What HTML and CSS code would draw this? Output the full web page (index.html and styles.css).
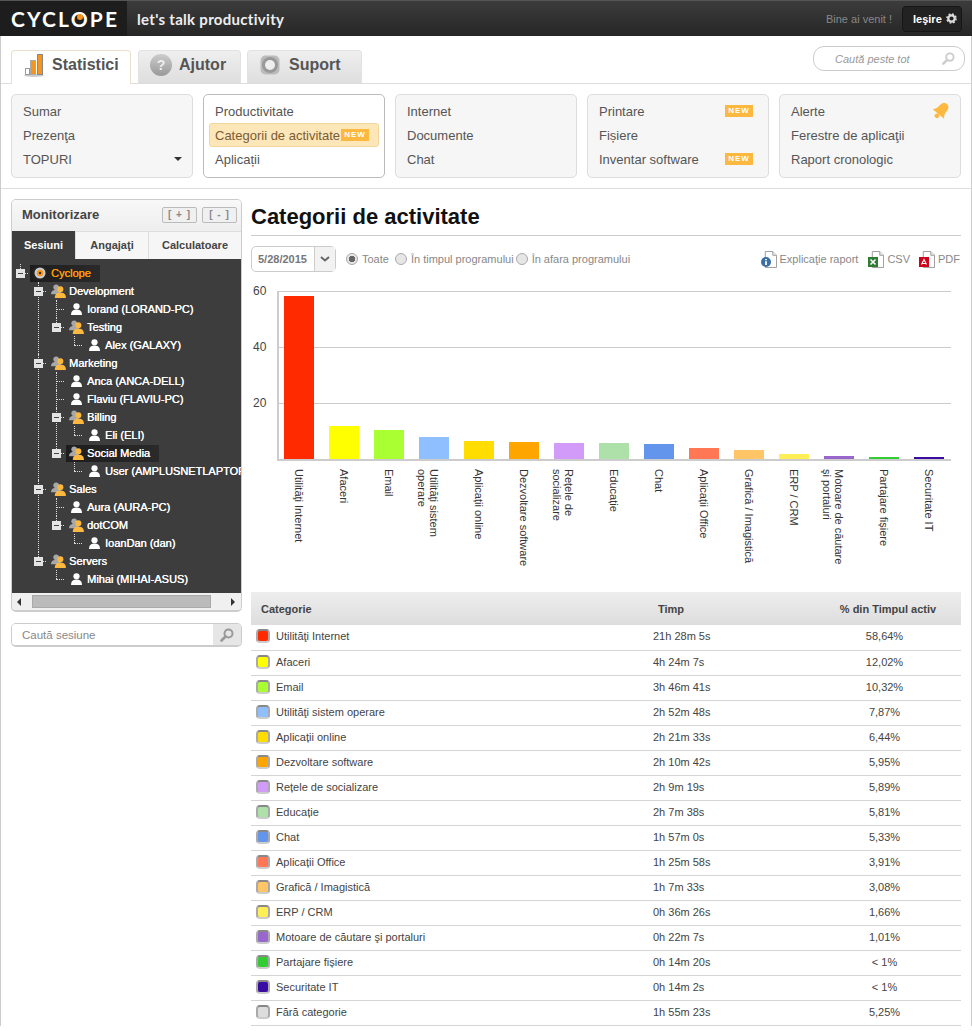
FILE: index.html
```html
<!DOCTYPE html>
<html lang="ro">
<head>
    <meta charset="UTF-8">
    <title>Cyclope - Categorii de activitate</title>
    <link rel="stylesheet" href="styles.css">
</head>
<body>

    <!-- shared icons -->
    <svg class="defs" width="0" height="0">
        <symbol id="i-person" viewBox="0 0 12 13">
            <circle cx="6" cy="3.6" r="3.4" fill="#fff"/>
            <path d="M0 13c0-3.6 1.6-5 4-5.6h4c2.4 .6 4 2 4 5.6z" fill="#fff"/>
        </symbol>
        <symbol id="i-group" viewBox="0 0 16 15">
            <circle cx="5.5" cy="3.5" r="3" fill="#a8a8a8"/>
            <path d="M0 11c0-3 1.5-4 3.5-4.5h4C9.5 7 11 8 11 11z" fill="#a8a8a8"/>
            <circle cx="10" cy="5.5" r="3.2" fill="#fdb93f"/>
            <path d="M4 15c0-3.5 1.8-5 4-5.5h4c2.2 .5 4 2 4 5.5z" fill="#fdb93f"/>
        </symbol>
        <symbol id="i-search" viewBox="0 0 14 14">
            <circle cx="8.5" cy="5.5" r="4" fill="none" stroke="currentColor" stroke-width="2"/>
            <path d="M5.5 8.5L1.5 12.5" stroke="currentColor" stroke-width="2.6" stroke-linecap="round"/>
        </symbol>
        <symbol id="i-doc" viewBox="0 0 16 18">
            <path d="M3.5 .5h8l4 4v13h-12z" fill="#fff" stroke="#999"/>
            <path d="M11.5 .5v4h4" fill="#eee" stroke="#999"/>
        </symbol>
    </svg>

    <header class="topbar">
        <div class="logo">CYCL<span class="logo-o">O</span>PE</div>
        <div class="slogan">let's talk productivity</div>
        <div class="welcome">Bine ai venit !</div>
        <a class="logout">Ieşire
            <svg class="gear" viewBox="0 0 12 12">
                <circle cx="6" cy="6" r="3.5" fill="none" stroke="#ddd" stroke-width="2.4"/>
                <circle cx="6" cy="6" r="5" fill="none" stroke="#ddd" stroke-width="1.6" stroke-dasharray="2 1.93"/>
            </svg>
        </a>
    </header>

    <div class="page">
        <nav class="tabbar">
            <a class="tab active">
                <svg class="tab-chart" viewBox="0 0 20 24">
                    <ellipse cx="10" cy="22.5" rx="10" ry="1.5" fill="#ccc"/>
                    <rect x="1.5" y="15.5" width="4" height="6" fill="#fff" stroke="#999"/>
                    <rect x="6.5" y="7.5" width="5" height="14" fill="#f7941d" stroke="#aaa"/>
                    <rect x="13.5" y="1.5" width="5" height="20" fill="#f7941d" stroke="#888"/>
                </svg>
                Statistici
            </a>
            <a class="tab tab-help"><span class="help-ico">?</span>Ajutor</a>
            <a class="tab tab-support">
                <svg class="support-ico" viewBox="0 0 20 20">
                    <rect x=".5" y=".5" width="19" height="19" rx="5" fill="#bbb"/>
                    <circle cx="10" cy="10" r="8" fill="#999"/>
                    <circle cx="10" cy="10" r="5" fill="#eee"/>
                </svg>
                Suport
            </a>
            <div class="global-search">
                <input type="text" placeholder="Caută peste tot">
                <svg class="search-ico"><use href="#i-search"/></svg>
            </div>
        </nav>

        <div class="submenu">
            <ul class="menu-box">
                <li>Sumar</li>
                <li>Prezenţa</li>
                <li>TOPURI<span class="caret"></span></li>
            </ul>
            <ul class="menu-box current">
                <li>Productivitate</li>
                <li class="selected">Categorii de activitate<span class="new">NEW</span></li>
                <li>Aplicații</li>
            </ul>
            <ul class="menu-box">
                <li>Internet</li>
                <li>Documente</li>
                <li>Chat</li>
            </ul>
            <ul class="menu-box">
                <li>Printare<span class="new">NEW</span></li>
                <li>Fișiere</li>
                <li>Inventar software<span class="new">NEW</span></li>
            </ul>
            <ul class="menu-box">
                <li>Alerte
                    <svg class="bell" viewBox="1 1 14 14">
                        <g transform="rotate(40 8 8)" fill="#fdb93f">
                            <path d="M8 0C5 0 4 2.5 4 5.5 4 8.5 3 10 1.5 11.5h13C13 10 12 8.5 12 5.5 12 2.5 11 0 8 0z"/>
                            <circle cx="8" cy="13.5" r="2"/>
                        </g>
                    </svg>
                </li>
                <li>Ferestre de aplicaţii</li>
                <li>Raport cronologic</li>
            </ul>
        </div>

        <div class="content">
            <aside class="sidebar">
                <section class="monitor">
                    <div class="monitor-head">
                        <h3>Monitorizare</h3>
                        <a class="mini-btn">[ + ]</a>
                        <a class="mini-btn">[ - ]</a>
                    </div>
                    <div class="monitor-tabs">
                        <a class="m-tab on">Sesiuni</a>
                        <a class="m-tab">Angajaţi</a>
                        <a class="m-tab">Calculatoare</a>
                    </div>
                    <div class="tree">
                        <ul>
                            <li>
                                <div class="node"><span class="toggle"></span><span class="node-body sel root">
                                    <svg class="ico-root" viewBox="0 0 14 14"><rect width="14" height="14" rx="4" fill="#222"/><circle cx="7" cy="7" r="5.5" fill="#ccc"/><circle cx="7" cy="7" r="3.2" fill="#f7941d"/><circle cx="7" cy="7" r="1.2" fill="#333"/></svg>
                                    <span class="name">Cyclope</span></span></div>
                                <ul>
                                    <li>
                                        <div class="node"><span class="toggle"></span><span class="node-body"><svg class="ico-group"><use href="#i-group"/></svg><span class="name">Development</span></span></div>
                                        <ul>
                                            <li><div class="node"><span class="no-toggle"></span><span class="node-body"><svg class="ico-person"><use href="#i-person"/></svg><span class="name">Iorand (LORAND-PC)</span></span></div></li>
                                            <li>
                                                <div class="node"><span class="toggle"></span><span class="node-body"><svg class="ico-group"><use href="#i-group"/></svg><span class="name">Testing</span></span></div>
                                                <ul>
                                                    <li><div class="node"><span class="no-toggle"></span><span class="node-body"><svg class="ico-person"><use href="#i-person"/></svg><span class="name">Alex (GALAXY)</span></span></div></li>
                                                </ul>
                                            </li>
                                        </ul>
                                    </li>
                                    <li>
                                        <div class="node"><span class="toggle"></span><span class="node-body"><svg class="ico-group"><use href="#i-group"/></svg><span class="name">Marketing</span></span></div>
                                        <ul>
                                            <li><div class="node"><span class="no-toggle"></span><span class="node-body"><svg class="ico-person"><use href="#i-person"/></svg><span class="name">Anca (ANCA-DELL)</span></span></div></li>
                                            <li><div class="node"><span class="no-toggle"></span><span class="node-body"><svg class="ico-person"><use href="#i-person"/></svg><span class="name">Flaviu (FLAVIU-PC)</span></span></div></li>
                                            <li>
                                                <div class="node"><span class="toggle"></span><span class="node-body"><svg class="ico-group"><use href="#i-group"/></svg><span class="name">Billing</span></span></div>
                                                <ul>
                                                    <li><div class="node"><span class="no-toggle"></span><span class="node-body"><svg class="ico-person"><use href="#i-person"/></svg><span class="name">Eli (ELI)</span></span></div></li>
                                                </ul>
                                            </li>
                                            <li>
                                                <div class="node"><span class="toggle"></span><span class="node-body sel"><svg class="ico-group"><use href="#i-group"/></svg><span class="name">Social Media</span></span></div>
                                                <ul>
                                                    <li><div class="node"><span class="no-toggle"></span><span class="node-body"><svg class="ico-person"><use href="#i-person"/></svg><span class="name">User (AMPLUSNETLAPTOP)</span></span></div></li>
                                                </ul>
                                            </li>
                                        </ul>
                                    </li>
                                    <li>
                                        <div class="node"><span class="toggle"></span><span class="node-body"><svg class="ico-group"><use href="#i-group"/></svg><span class="name">Sales</span></span></div>
                                        <ul>
                                            <li><div class="node"><span class="no-toggle"></span><span class="node-body"><svg class="ico-person"><use href="#i-person"/></svg><span class="name">Aura (AURA-PC)</span></span></div></li>
                                            <li>
                                                <div class="node"><span class="toggle"></span><span class="node-body"><svg class="ico-group"><use href="#i-group"/></svg><span class="name">dotCOM</span></span></div>
                                                <ul>
                                                    <li><div class="node"><span class="no-toggle"></span><span class="node-body"><svg class="ico-person"><use href="#i-person"/></svg><span class="name">IoanDan (dan)</span></span></div></li>
                                                </ul>
                                            </li>
                                        </ul>
                                    </li>
                                    <li>
                                        <div class="node"><span class="toggle"></span><span class="node-body"><svg class="ico-group"><use href="#i-group"/></svg><span class="name">Servers</span></span></div>
                                        <ul>
                                            <li><div class="node"><span class="no-toggle"></span><span class="node-body"><svg class="ico-person"><use href="#i-person"/></svg><span class="name">Mihai (MIHAI-ASUS)</span></span></div></li>
                                        </ul>
                                    </li>
                                </ul>
                            </li>
                        </ul>
                    </div>
                    <div class="hscroll">
                        <span class="arrow-left"></span>
                        <span class="thumb"></span>
                        <span class="arrow-right"></span>
                    </div>
                </section>
                <div class="session-search">
                    <input type="text" placeholder="Caută sesiune">
                    <span class="session-btn"><svg class="session-ico"><use href="#i-search"/></svg></span>
                </div>
            </aside>

            <main class="main">
                <h1>Categorii de activitate</h1>

                <div class="controls">
                    <div class="datebox">
                        <span class="date">5/28/2015</span>
                        <span class="date-btn">
                            <svg viewBox="0 0 10 6" width="10" height="6"><path d="M1 1l4 3.5L9 1" fill="none" stroke="#666" stroke-width="2"/></svg>
                        </span>
                    </div>
                    <label class="radio on"><span class="dot"></span>Toate</label>
                    <label class="radio"><span class="dot"></span>În timpul programului</label>
                    <label class="radio"><span class="dot"></span>În afara programului</label>
                    <div class="links">
                        <a class="doc-link first">
                            <span class="doc"><svg class="doc-page"><use href="#i-doc"/></svg>
                                <svg class="doc-badge" viewBox="0 0 10 10"><circle cx="5" cy="5" r="5" fill="#3a6ea5"/><path d="M5 2v1.3M5 4.3V8" stroke="#fff" stroke-width="1.8"/></svg></span>
                            Explicaţie raport</a>
                        <a class="doc-link">
                            <span class="doc"><svg class="doc-page"><use href="#i-doc"/></svg>
                                <svg class="doc-badge" viewBox="0 0 10 10"><rect width="10" height="10" fill="#2e7d32"/><path d="M2.5 2.5l5 5M7.5 2.5l-5 5" stroke="#fff" stroke-width="1.6"/></svg></span>
                            CSV</a>
                        <a class="doc-link">
                            <span class="doc"><svg class="doc-page"><use href="#i-doc"/></svg>
                                <svg class="doc-badge" viewBox="0 0 10 10"><rect width="10" height="10" fill="#d0021b"/><path d="M2.5 7.5L5 2.5l2.5 5M3.5 6.5h3" fill="none" stroke="#fff" stroke-width="1.1"/></svg></span>
                            PDF</a>
                    </div>
                </div>

                <div class="chart">
                    <div class="plot">
                        <div class="tick tick-60"><span>60</span></div>
                        <div class="tick tick-40"><span>40</span></div>
                        <div class="tick tick-20"><span>20</span></div>
                        <div class="bar" style="height:163px;background:#ff2a00"></div>
                        <div class="bar" style="height:33px;background:#ffff00"></div>
                        <div class="bar" style="height:29px;background:#aaff33"></div>
                        <div class="bar" style="height:22px;background:#8fbfff"></div>
                        <div class="bar" style="height:18px;background:#ffdd00"></div>
                        <div class="bar" style="height:17px;background:#ffa500"></div>
                        <div class="bar" style="height:16px;background:#d29bfa"></div>
                        <div class="bar" style="height:16px;background:#aee0aa"></div>
                        <div class="bar" style="height:15px;background:#6495ed"></div>
                        <div class="bar" style="height:11px;background:#ff7755"></div>
                        <div class="bar" style="height:9px;background:#ffc566"></div>
                        <div class="bar" style="height:5px;background:#ffee55"></div>
                        <div class="bar" style="height:3px;background:#9966cc"></div>
                        <div class="bar" style="height:2px;background:#33cc33"></div>
                        <div class="bar" style="height:2px;background:#3a0ca3"></div>
                    </div>
                    <div class="labels">
                        <span>Utilităţi Internet</span>
                        <span>Afaceri</span>
                        <span>Email</span>
                        <span>Utilităţi sistem<br>operare</span>
                        <span>Aplicații online</span>
                        <span>Dezvoltare software</span>
                        <span>Rețele de<br>socializare</span>
                        <span>Educație</span>
                        <span>Chat</span>
                        <span>Aplicații Office</span>
                        <span>Grafică / Imagistică</span>
                        <span>ERP / CRM</span>
                        <span>Motoare de căutare<br>şi portaluri</span>
                        <span>Partajare fișiere</span>
                        <span>Securitate IT</span>
                    </div>
                </div>

                <table class="report">
                    <colgroup>
                        <col class="col-cat">
                        <col class="col-time">
                        <col>
                    </colgroup>
                    <thead>
                        <tr><th class="th-cat">Categorie</th><th class="th-time">Timp</th><th class="th-pct">% din Timpul activ</th></tr>
                    </thead>
                    <tbody>
                        <tr><td><span class="swatch" style="background:#ff2a00"></span>Utilităţi Internet</td><td>21h 28m 5s</td><td class="pct">58,64%</td></tr>
                        <tr><td><span class="swatch" style="background:#ffff00"></span>Afaceri</td><td>4h 24m 7s</td><td class="pct">12,02%</td></tr>
                        <tr><td><span class="swatch" style="background:#aaff33"></span>Email</td><td>3h 46m 41s</td><td class="pct">10,32%</td></tr>
                        <tr><td><span class="swatch" style="background:#8fbfff"></span>Utilităţi sistem operare</td><td>2h 52m 48s</td><td class="pct">7,87%</td></tr>
                        <tr><td><span class="swatch" style="background:#ffdd00"></span>Aplicații online</td><td>2h 21m 33s</td><td class="pct">6,44%</td></tr>
                        <tr><td><span class="swatch" style="background:#ffa500"></span>Dezvoltare software</td><td>2h 10m 42s</td><td class="pct">5,95%</td></tr>
                        <tr><td><span class="swatch" style="background:#d29bfa"></span>Rețele de socializare</td><td>2h 9m 19s</td><td class="pct">5,89%</td></tr>
                        <tr><td><span class="swatch" style="background:#aee0aa"></span>Educație</td><td>2h 7m 38s</td><td class="pct">5,81%</td></tr>
                        <tr><td><span class="swatch" style="background:#6495ed"></span>Chat</td><td>1h 57m 0s</td><td class="pct">5,33%</td></tr>
                        <tr><td><span class="swatch" style="background:#ff7755"></span>Aplicații Office</td><td>1h 25m 58s</td><td class="pct">3,91%</td></tr>
                        <tr><td><span class="swatch" style="background:#ffc566"></span>Grafică / Imagistică</td><td>1h 7m 33s</td><td class="pct">3,08%</td></tr>
                        <tr><td><span class="swatch" style="background:#ffee55"></span>ERP / CRM</td><td>0h 36m 26s</td><td class="pct">1,66%</td></tr>
                        <tr><td><span class="swatch" style="background:#9966cc"></span>Motoare de căutare şi portaluri</td><td>0h 22m 7s</td><td class="pct">1,01%</td></tr>
                        <tr><td><span class="swatch" style="background:#33cc33"></span>Partajare fișiere</td><td>0h 14m 20s</td><td class="pct">&lt; 1%</td></tr>
                        <tr><td><span class="swatch" style="background:#3a0ca3"></span>Securitate IT</td><td>0h 14m 2s</td><td class="pct">&lt; 1%</td></tr>
                        <tr><td><span class="swatch" style="background:#dddddd"></span>Fără categorie</td><td>1h 55m 23s</td><td class="pct">5,25%</td></tr>
                    </tbody>
                </table>
            </main>
        </div>
    </div>

</body>
</html>
```

FILE: styles.css
```css
* {
    margin: 0;
    padding: 0;
    box-sizing: border-box;
}
body {
    font-family: "Liberation Sans", Arial, sans-serif;
    font-size: 11px;
    color: #444;
    background: #fff;
}
ul {
    list-style: none;
}
.defs {
    position: absolute;
}

/* top bar */
.topbar {
    display: flex;
    align-items: center;
    height: 36px;
    padding-right: 10px;
    background: linear-gradient(#3c3c3c, #262626);
    border-top: 1px solid #555;
}
.logo {
    width: 127px;
    height: 35px;
    padding-left: 11px;
    background: #1d1d1d;
    color: #fff;
    font-family: "Lato", sans-serif;
    font-weight: 700;
    font-size: 21px;
    line-height: 35px;
    letter-spacing: 2.2px;
    white-space: nowrap;
}
.logo-o {
    position: relative;
    color: #fff;
}
.logo-o::after {
    content: "";
    position: absolute;
    left: 6px;
    top: 8px;
    width: 6px;
    height: 6px;
    border-radius: 50%;
    background: #f7941d;
}
.slogan {
    margin-left: 10px;
    font-family: "Lato", sans-serif;
    font-weight: 700;
    font-size: 15px;
    letter-spacing: .3px;
    color: #eee;
}
.welcome {
    margin-left: auto;
    font-size: 11px;
    color: #888;
}
.logout {
    display: flex;
    align-items: center;
    gap: 4px;
    width: 60px;
    height: 26px;
    margin-left: 10px;
    padding-left: 10px;
    background: #222;
    border: 1px solid #161616;
    border-radius: 4px;
    color: #fff;
    font-weight: bold;
    font-size: 11px;
}
.gear {
    width: 11px;
    height: 11px;
}

/* page frame */
.page {
    border-left: 1px solid #ccc;
    border-right: 1px solid #ccc;
}

/* main tabs */
.tabbar {
    display: flex;
    align-items: flex-end;
    height: 48px;
    padding-left: 10px;
    padding-right: 6px;
    border-bottom: 1px solid #ddd;
}
.tab {
    display: flex;
    align-items: center;
    height: 33px;
    margin-right: 7px;
    padding-bottom: 4px;
    font-size: 16px;
    font-weight: bold;
    color: #555;
    background: linear-gradient(#efefef, #dedede);
    border: 1px solid #e2e2e2;
    border-bottom: none;
    border-radius: 4px 4px 0 0;
}
.tab.active {
    width: 120px;
    height: 34px;
    margin-bottom: -1px;
    padding-left: 12px;
    padding-bottom: 5px;
    background: #fff;
    border-color: #e8e0cc;
}
.tab-chart {
    width: 20px;
    height: 24px;
    margin-right: 8px;
}
.tab-help {
    width: 103px;
    margin-right: 6px;
    padding-left: 11px;
}
.help-ico {
    width: 22px;
    height: 22px;
    margin-right: 7px;
    border-radius: 50%;
    background: linear-gradient(#ccc, #999);
    color: #eee;
    font-size: 14px;
    line-height: 22px;
    text-align: center;
}
.tab-support {
    width: 115px;
    margin-right: 0;
    padding-left: 12px;
}
.support-ico {
    width: 20px;
    height: 20px;
    margin-right: 9px;
}
.global-search {
    position: relative;
    align-self: flex-start;
    width: 152px;
    height: 25px;
    margin-top: 10px;
    margin-left: auto;
}
.global-search input {
    width: 100%;
    height: 100%;
    padding-left: 21px;
    border: 1px solid #ccc;
    border-radius: 11px;
    outline: none;
    font-family: inherit;
    font-size: 11px;
    font-style: italic;
}
.global-search input::placeholder {
    color: #999;
}
.search-ico {
    position: absolute;
    right: 10px;
    top: 6px;
    width: 13px;
    height: 13px;
    color: #ccc;
}

/* submenu boxes */
.submenu {
    display: flex;
    gap: 10px;
    padding: 10px 10px 10px;
    height: 105px;
    border-bottom: 1px solid #ddd;
}
.menu-box {
    width: 182px;
    height: 84px;
    padding: 4px 5px;
    background: #f6f6f6;
    border: 1px solid #ddd;
    border-radius: 5px;
}
.menu-box.current {
    background: #fff;
    border-color: #bbb;
}
.menu-box li {
    position: relative;
    display: flex;
    align-items: center;
    justify-content: space-between;
    height: 24px;
    padding: 0 10px 0 6px;
    font-size: 13px;
    color: #555;
    white-space: nowrap;
}
.menu-box li.selected {
    padding-right: 9px;
    background: #fde6b8;
    border: 1px solid #f2d79c;
    border-radius: 3px;
    padding-left: 5px;
    color: #7a5c34;
}
.new {
    width: 28px;
    height: 12px;
    background: #fdb93f;
    color: #fff;
    font-size: 8px;
    font-weight: bold;
    line-height: 12px;
    letter-spacing: 1px;
    text-align: center;
}
.caret {
    margin-right: -5px;
    border-left: 4px solid transparent;
    border-right: 4px solid transparent;
    border-top: 4px solid #333;
}
.bell {
    width: 16px;
    height: 16px;
    margin-top: -1px;
    margin-right: -4px;
}

/* layout */
.content {
    display: flex;
    gap: 9px;
    padding: 10px 10px 0;
}
.sidebar {
    width: 231px;
}
.main {
    width: 710px;
}

/* monitor panel */
.monitor {
    border: 1px solid #ccc;
    border-bottom: 2px solid #ccc;
    border-radius: 5px;
    overflow: hidden;
}
.monitor-head {
    display: flex;
    align-items: center;
    gap: 5px;
    height: 31px;
    padding: 0 4px 2px 10px;
    background: linear-gradient(#f8f8f8, #eee);
}
.monitor-head h3 {
    flex: 1;
    font-size: 13px;
    color: #444;
}
.mini-btn {
    width: 35px;
    height: 16px;
    background: #f0f0f0;
    border: 1px solid #bbb;
    border-radius: 2px;
    color: #888;
    font-size: 10px;
    font-weight: bold;
    line-height: 14px;
    text-align: center;
    letter-spacing: 1px;
    white-space: nowrap;
}
.monitor-tabs {
    display: flex;
    height: 28px;
}
.m-tab {
    height: 28px;
    background: #f6f6f6;
    border-top: 1px solid #ddd;
    border-left: 1px solid #ddd;
    font-weight: bold;
    font-size: 11px;
    line-height: 27px;
    text-align: center;
    color: #444;
}
.m-tab:nth-child(1) {
    width: 63px;
}
.m-tab:nth-child(2) {
    width: 73px;
}
.m-tab:nth-child(3) {
    flex: 1;
}
.m-tab.on {
    background: #3d3d3d;
    border: none;
    border-top: 1px solid #3d3d3d;
    color: #fff;
}

/* session tree */
.tree {
    height: 334px;
    padding-top: 5px;
    overflow: hidden;
    background: #3d3d3d;
    color: #fff;
    white-space: nowrap;
}
.tree li {
    position: relative;
}
.tree li::before {
    content: "";
    position: absolute;
    left: 8px;
    top: 0;
    bottom: 0;
    border-left: 1px dotted #ddd;
}
.tree li:last-child::before {
    bottom: auto;
    height: 9px;
}
.tree li::after {
    content: "";
    position: absolute;
    left: 8px;
    top: 9px;
    width: 8px;
    border-top: 1px dotted #ddd;
}
.tree ul ul {
    margin-left: 18px;
}
.node {
    position: relative;
    z-index: 1;
    display: flex;
    align-items: center;
    height: 18px;
}
.toggle {
    position: relative;
    flex: none;
    width: 9px;
    height: 9px;
    margin: 0 5px 0 4px;
    background: #e4e4e4;
}
.toggle::after {
    content: "";
    position: absolute;
    left: 2px;
    top: 4px;
    width: 5px;
    height: 1px;
    background: #444;
}
.no-toggle {
    flex: none;
    width: 18px;
}
.node-body {
    display: flex;
    flex: none;
    align-items: center;
    height: 17px;
    padding-right: 9px;
}
.node-body.sel {
    background: linear-gradient(90deg, #1d1d1d, #2a2a2a);
}
.ico-group {
    width: 15px;
    height: 14px;
    margin-left: 3px;
}
.ico-person {
    width: 11px;
    height: 12px;
    margin-left: 5px;
    margin-right: 2px;
}
.ico-root {
    width: 14px;
    height: 14px;
    margin-left: 3px;
    margin-right: 1px;
}
.name {
    padding-left: 3px;
    font-size: 11px;
    text-shadow: .3px 0 0 #fff;
}
.root .name {
    color: #ff9c00;
    text-shadow: .3px 0 0 #ff9c00;
}

/* fake scrollbar */
.hscroll {
    display: flex;
    align-items: center;
    height: 17px;
    background: #f0f0f0;
}
.thumb {
    width: 179px;
    height: 13px;
    margin-left: 11px;
    background: #bbb;
    border: 1px solid #aaa;
}
.arrow-left {
    margin-left: 5px;
    border-top: 4px solid transparent;
    border-bottom: 4px solid transparent;
    border-right: 4px solid #333;
}
.arrow-right {
    margin-left: 20px;
    border-top: 4px solid transparent;
    border-bottom: 4px solid transparent;
    border-left: 4px solid #333;
}

/* session search */
.session-search {
    display: flex;
    height: 24px;
    margin-top: 11px;
    border: 1px solid #ccc;
    border-bottom-width: 2px;
    border-radius: 5px;
    overflow: hidden;
}
.session-search input {
    flex: 1;
    min-width: 0;
    padding-left: 10px;
    border: none;
    outline: none;
    font-family: inherit;
    font-size: 11.5px;
}
.session-search input::placeholder {
    color: #888;
}
.session-btn {
    display: flex;
    align-items: center;
    justify-content: center;
    width: 28px;
    background: #e6e6e6;
}
.session-ico {
    width: 14px;
    height: 14px;
    color: #999;
}

/* report head */
h1 {
    height: 37px;
    padding-top: 5px;
    border-bottom: 1px solid #ccc;
    font-size: 22px;
    line-height: 25px;
    color: #111;
}
.controls {
    display: flex;
    align-items: center;
    height: 26px;
    margin-top: 10px;
}
.datebox {
    display: flex;
    width: 85px;
    height: 26px;
    margin-right: 10px;
    border: 1px solid #ccc;
    border-radius: 5px;
}
.date {
    flex: 1;
    padding-left: 6px;
    font-weight: bold;
    line-height: 24px;
    color: #777;
}
.date-btn {
    display: flex;
    align-items: center;
    justify-content: center;
    width: 21px;
    border-left: 1px solid #ccc;
    background: #f2f2f2;
}
.radio {
    display: flex;
    align-items: center;
    margin-right: 2px;
    font-size: 11px;
    color: #888;
}
.radio.on {
    margin-right: 6px;
}
.dot {
    width: 12px;
    height: 12px;
    margin-right: 4px;
    border: 1px solid #aaa;
    border-radius: 50%;
    background: #e6e6e6;
}
.radio.on .dot {
    background: radial-gradient(circle, #666 0, #666 3px, #e6e6e6 3.5px);
}
.links {
    display: flex;
    gap: 9px;
    margin-left: auto;
    padding-right: 1px;
}
.doc-link {
    display: flex;
    align-items: center;
    gap: 3px;
    color: #888;
}
.doc-link.first {
    margin-right: 1px;
}
.doc {
    position: relative;
    width: 16px;
    height: 17px;
}
.doc-page {
    position: absolute;
    left: 1px;
    top: 0;
    width: 15px;
    height: 17px;
}
.doc-badge {
    position: absolute;
    left: 0;
    top: 6px;
    width: 10px;
    height: 10px;
}

/* chart */
.chart {
    height: 320px;
}
.plot {
    position: relative;
    top: 19px;
    display: flex;
    align-items: flex-end;
    gap: 15px;
    width: 674px;
    height: 170px;
    margin-left: 26px;
    padding-left: 5px;
    border-left: 2px solid #ccc;
    border-bottom: 2px solid #ccc;
}
.bar {
    position: relative;
    width: 30px;
}
.tick {
    position: absolute;
    left: 0;
    right: 0;
    border-top: 1px solid #ccc;
}
.tick span {
    position: absolute;
    left: -26px;
    top: -8px;
    font-size: 12px;
    color: #444;
}
.tick-60 {
    top: 0;
}
.tick-40 {
    top: 56px;
}
.tick-20 {
    top: 112px;
}
.labels {
    display: flex;
    gap: 15px;
    margin-top: 27px;
    padding-left: 33px;
}
.labels span {
    width: 30px;
    height: 110px;
    padding-right: 9px;
    writing-mode: vertical-rl;
    font-size: 11px;
    line-height: 12px;
    color: #333;
    white-space: nowrap;
}

/* table */
.report {
    width: 710px;
    table-layout: fixed;
    border-collapse: collapse;
}
.col-cat {
    width: 402px;
}
.col-time {
    width: 155px;
}
.report th {
    height: 33px;
    background: linear-gradient(#eee, #ddd);
    font-size: 11px;
    color: #444;
    text-align: left;
}
.th-cat {
    padding-left: 10px;
}
.th-time {
    padding-left: 5px;
}
.report .th-pct {
    padding-left: 7px;
    text-align: center;
}
.report td {
    height: 25px;
    padding-bottom: 2px;
    border-bottom: 1px solid #d4d4d4;
    font-size: 11px;
    color: #444;
}
.swatch {
    display: inline-block;
    width: 14px;
    height: 14px;
    margin: 0 6px 0 5px;
    border: 2px solid;
    border-color: #888 #aaa #ccc;
    border-radius: 4px;
    vertical-align: -3px;
}
.pct {
    text-align: center;
}
```
